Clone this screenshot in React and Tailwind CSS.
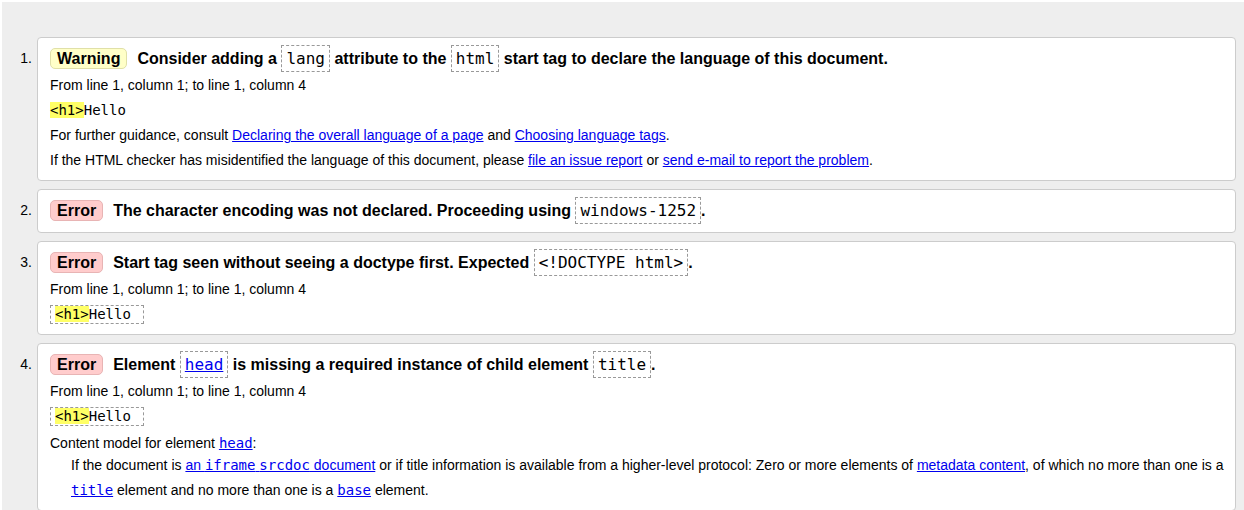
import React from 'react';

const sans = 'font-["Liberation_Sans",Arial,sans-serif]';
const mono = 'font-["DejaVu_Sans_Mono",monospace]';

const Badge = ({ kind }) => {
    const tone = kind === 'Warning'
        ? 'bg-[#ffffc8] border-[#e0e0a8]'
        : 'bg-[#ffcccc] border-[#e8b4b4]';
    return (
        <span className={`inline-block border rounded-[5px] px-[6px] leading-[19px] mr-[10px] ${tone}`}>
            {kind}
        </span>
    );
};

// dashed code box used in the message title
const TCode = ({ children }) => (
    <code className={`${mono} font-normal text-[16px] border border-dashed border-[#999] px-[4px] py-[3px]`}>
        {children}
    </code>
);

const Link = ({ children }) => (
    <a href="#" className="text-[#0000ee] underline">{children}</a>
);

const Extract = ({ boxed }) => (
    <code
        className={`${mono} text-[14px] whitespace-pre ${boxed ? 'inline-block border border-dashed border-[#999] px-[4px] leading-[17px]' : ''}`}
    >
        <b className="font-normal bg-[#ffff66]">&lt;h1&gt;</b>Hello{boxed ? ' ' : ''}
    </code>
);

const Item = ({ n, kind, title, children }) => (
    <li className="flex items-start">
        <span className="w-[30px] shrink-0 text-right text-[14px] leading-[26px] pt-[8px] mr-[5px]">{n}.</span>
        <div className="flex-1 bg-white border border-[#cccccc] rounded-[4px] pl-[12px] pr-[8px] pt-[8px] pb-[7px]">
            <p className="text-[16px] font-bold leading-[27px] -mt-[1px] mb-[1px]">
                <Badge kind={kind} />
                {title}
            </p>
            <div className="text-[14px] leading-[25px]">{children}</div>
        </div>
    </li>
);

const Location = () => <p>From line 1, column 1; to line 1, column 4</p>;

export default function App() {
    return (
        <div className={`${sans} text-black bg-white pt-[2px] pl-[2px]`}>
            <div className="bg-[#eeeeee] pt-[35px] pr-[8px] pb-[40px] min-h-[508px]">
                <ol className="flex flex-col gap-[8px]">
                    <Item
                        n={1}
                        kind="Warning"
                        title={<>Consider adding a <TCode>lang</TCode> attribute to the <TCode>html</TCode> start tag to declare the language of this document.</>}
                    >
                        <Location />
                        <p><Extract /></p>
                        <p>
                            For further guidance, consult <Link>Declaring the overall language of a page</Link> and{' '}
                            <Link>Choosing language tags</Link>.
                        </p>
                        <p>
                            If the HTML checker has misidentified the language of this document, please{' '}
                            <Link>file an issue report</Link> or <Link>send e-mail to report the problem</Link>.
                        </p>
                    </Item>

                    <Item
                        n={2}
                        kind="Error"
                        title={<>The character encoding was not declared. Proceeding using <TCode>windows-1252</TCode>.</>}
                    />

                    <Item
                        n={3}
                        kind="Error"
                        title={<>Start tag seen without seeing a doctype first. Expected <TCode>&lt;!DOCTYPE html&gt;</TCode>.</>}
                    >
                        <Location />
                        <p><Extract boxed /></p>
                    </Item>

                    <Item
                        n={4}
                        kind="Error"
                        title={<>Element <TCode><span className="text-[#0000ee] underline">head</span></TCode> is missing a required instance of child element <TCode>title</TCode>.</>}
                    >
                        <Location />
                        <p><Extract boxed /></p>
                        <dl>
                            <dt className="leading-[19px] mt-[5px]">
                                Content model for element <a href="#" className={`${mono} text-[#0000ee] underline`}>head</a>:
                            </dt>
                            <dd className="pl-[21px]">
                                If the document is <Link>an <code className={mono}>iframe</code> <code className={mono}>srcdoc</code> document</Link>{' '}
                                or if title information is available from a higher-level protocol: Zero or more elements of{' '}
                                <Link>metadata content</Link>, of which no more than one is a
                                <br />
                                <a href="#" className={`${mono} text-[#0000ee] underline`}>title</a> element and no more than one is a{' '}
                                <a href="#" className={`${mono} text-[#0000ee] underline`}>base</a> element.
                            </dd>
                        </dl>
                    </Item>
                </ol>
            </div>
        </div>
    );
}
